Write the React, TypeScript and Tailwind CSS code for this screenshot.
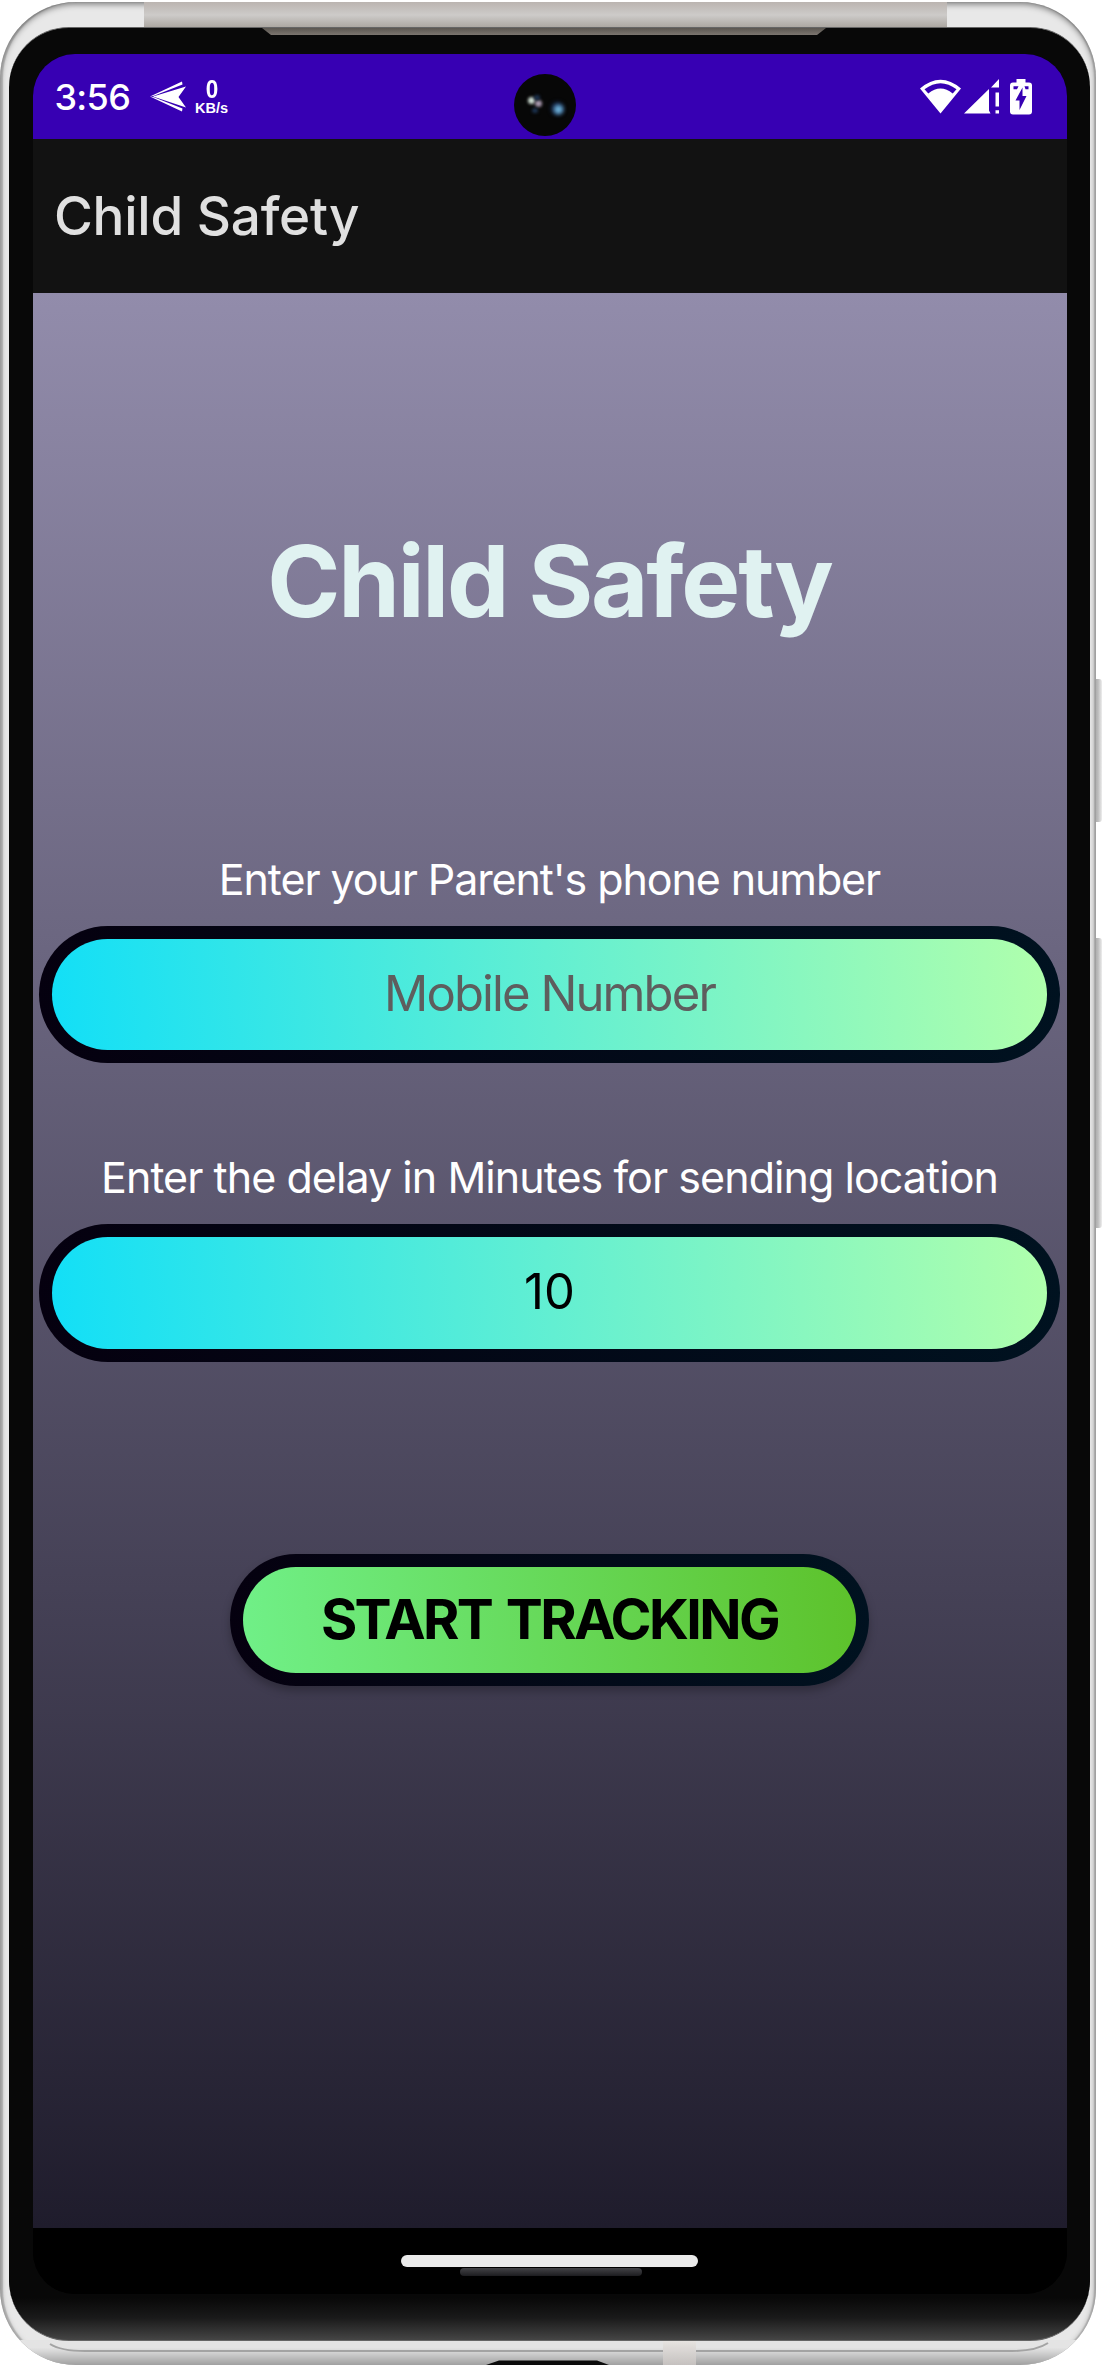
import React from "react";

function StatusBar() {
  return (
    <div className="relative flex h-[85px] shrink-0 items-center bg-[#3700b3] pl-[22px] pr-[35px] text-white">
      <span className="w-[78px] whitespace-nowrap text-[36px] font-medium leading-none tracking-[-0.7px]">3:56</span>
      <svg className="ml-[17px] h-[32px] w-[36px]" viewBox="0 0 36 32" fill="#fff">
        <path d="M3 15.5 36 5.5 28.5 16 36 26.500Z" />
        <path d="M0 15.500 32 0.500 32.500 3.500 4 14.700ZM0 15.500 32 30.500 32.500 27.500 4 16.300Z" />
      </svg>
      <div className="ml-[7px] flex w-[38px] flex-col items-center">
        <span className="scale-x-90 font-['Liberation_Sans'] text-[25px] font-bold leading-[24px]">0</span>
        <span className="font-['Liberation_Sans'] text-[14.500px] font-bold leading-[15px]">KB/s</span>
      </div>
      <div className="ml-auto flex items-center">
        <svg className="h-[36px] w-[41px]" viewBox="0 0 41 36" fill="#fff">
          <path fillRule="evenodd" d="M0 9.500Q20.500-8 41 9.500L20.500 34.500ZM4.500 10.300 8.300 14.500Q20.500 4.500 32.700 14.500L36.500 10.300Q20.500-2 4.500 10.300Z" />
        </svg>
        <svg className="ml-[3px] h-[36px] w-[36px]" viewBox="0 0 36 36" fill="#fff">
          <path d="M0 34.500 25 10V31.500L26.500 34.500ZM27 8.500 35 0V8.500ZM31.500 13.500H35V27.500H31.500ZM31.500 31.200H35V34.500H31.500Z" />
        </svg>
        <svg className="ml-[10px] h-[36px] w-[22px]" viewBox="0 0 22 36">
          <path fill="#fff" d="M6.500 0H15.500V3.500H19Q22 3.500 22 6.500V32.500Q22 35.500 19 35.500H3Q0 35.500 0 32.500V6.500Q0 3.500 3 3.500H6.500Z" />
          <path fill="#3700b3" d="M3.500 7.300H8.500L7 10.300H3.500ZM14.500 7.300H18.500V10.300H15.500ZM12.500 8.500V17H16.500L9.500 31V21.500H5.500Z" />
        </svg>
      </div>
      <div className="absolute left-[481.5px] top-[20px] h-[62px] w-[62px] rounded-full bg-[#070707]">
        <div className="absolute left-[14px] top-[23px] h-[7px] w-[7px] rounded-full bg-[#cfded4] blur-[1.500px]" />
        <div className="absolute left-[21px] top-[26px] h-[7px] w-[7px] rounded-full bg-[#a797ad] blur-[1.500px]" />
        <div className="absolute left-[20px] top-[21px] h-[5px] w-[6px] rounded-full bg-[#1c3350] blur-[1.500px]" />
        <div className="absolute left-[18px] top-[34px] h-[5px] w-[6px] rounded-full bg-[#1c3350] blur-[1.500px]" />
        <div className="absolute left-[37px] top-[28px] h-[13px] w-[13px] rounded-full bg-[#14284c] blur-[2px]" />
        <div className="absolute left-[40px] top-[31px] h-[9px] w-[9px] rounded-full bg-[#70b4dc] blur-[2px]" />
      </div>
    </div>
  );
}

function Pill({ children }: { children: React.ReactNode }) {
  return (
    <div className="mx-auto h-[137.5px] w-[1021.500px] rounded-full bg-[linear-gradient(85deg,#05000f,#001220)] p-[13px]">
      <div className="flex h-full items-center justify-center rounded-full bg-[linear-gradient(85deg,#12dff7,#62efd2_50%,#b0ffac)] pb-[2px]">
        {children}
      </div>
    </div>
  );
}

function Screen() {
  return (
    <div className="flex h-[2240px] w-[1034px] flex-col overflow-hidden rounded-[42px] bg-black">
      <StatusBar />
      <div className="flex h-[154px] shrink-0 items-center bg-[#121212] pl-[21.500px]">
        <h1 className="whitespace-nowrap text-[53px] font-medium leading-none tracking-[-0.25px] text-[#e0e0e0]">Child Safety</h1>
      </div>
      <main className="flex h-[1935px] shrink-0 flex-col items-center bg-[linear-gradient(180deg,#928cab,#1f1c2c)] text-center">
        <h2 className="mt-[228px] h-[120px] whitespace-nowrap text-[99px] font-bold leading-[120px] tracking-[-2.200px] text-[#e0f2f1]">Child Safety</h2>
        <label className="mt-[208px] h-[60px] whitespace-nowrap text-[43px] leading-[60px] tracking-[-1.100px] text-white">Enter your Parent's phone number</label>
        <div className="mt-[16.500px]">
          <Pill>
            <span className="whitespace-nowrap text-[49px] leading-none tracking-[-1.900px] text-[#5e5e5e]">Mobile Number</span>
          </Pill>
        </div>
        <label className="mt-[84px] h-[60px] whitespace-nowrap text-[43px] leading-[60px] tracking-[-0.950px] text-white">Enter the delay in Minutes for sending location</label>
        <div className="mt-[17px]">
          <Pill>
            <span className="text-[49px] leading-none text-black">10</span>
          </Pill>
        </div>
        <button className="mt-[192.500px] h-[132px] w-[639px] rounded-full bg-[linear-gradient(85deg,#05000f,#001220)] p-[13px] shadow-[0_5px_8px_rgba(0,0,0,0.25)]">
          <span className="flex h-full items-center justify-center whitespace-nowrap rounded-full bg-[linear-gradient(85deg,#70f088,#5dc22b)] pb-[3px] text-[55.500px] font-bold leading-none tracking-[-2.600px] [word-spacing:4px] text-black">
            START TRACKING
          </span>
        </button>
      </main>
      <div className="flex flex-1 flex-col items-center bg-black pt-[27px]">
        <div className="h-[12px] w-[297px] rounded-full bg-[#ebebeb]" />
        <div className="ml-[2px] mt-[1px] h-[8px] w-[182px] rounded-full bg-[linear-gradient(180deg,#424246,#1d1d20)]" />
      </div>
    </div>
  );
}

export default function App() {
  return (
    <div className="relative h-[2365px] w-[1103px] overflow-hidden bg-white font-[Inter,'Liberation_Sans',sans-serif]">
      <div className="absolute left-[1095px] top-[679px] h-[143px] w-[7px] rounded-r-[3px] bg-[linear-gradient(90deg,#a9a9a9,#bdbdbd_45%,#eeeeee)]" />
      <div className="absolute left-[1095px] top-[938px] h-[290px] w-[7px] rounded-r-[3px] bg-[linear-gradient(90deg,#a9a9a9,#bdbdbd_45%,#eeeeee)]" />
      <div className="relative mt-[2px] h-[2363px] w-[1096px] overflow-hidden rounded-[76px] bg-[#e8e8e8] shadow-[inset_0_2px_6px_rgba(0,0,0,0.5),inset_3px_0_1px_#c6c6c6,inset_-2px_0_1px_#cccccc]">
        <div className="absolute inset-x-0 bottom-0 h-[25px] bg-[linear-gradient(180deg,#e4e4e4_0_30%,#d4d4d4_48%,#a0a0a0)]" />
        <svg className="absolute bottom-0 left-0 h-[30px] w-[1096px]" viewBox="0 0 1096 30" fill="none">
          <path d="M50 9Q61 16 85 16H1012Q1036 16 1048 8" stroke="#a3a3a3" strokeWidth="2" />
          <path d="M486 30 499 25.500H597L609 30Z" fill="#0b0b0b" />
        </svg>
        <div className="absolute bottom-0 left-[663px] h-[25px] w-[33px] bg-[linear-gradient(180deg,#e8e5e2,#c5c1bf)]" />
        <div className="absolute left-[144px] top-0 h-[26px] w-[803px] bg-[linear-gradient(180deg,#bbb4b0,#cdcbc9_50%,#aaa59f)]" />
        <div className="relative ml-[9px] mt-[25px] flex h-[2314px] w-[1081px] rounded-[60px] border-t border-b border-[#666666] bg-[linear-gradient(180deg,#080808_0,#080808_2270px,#1a1a1a_2290px,#454545_2312px)] pl-[23.500px] pt-[26px]">
          <div className="absolute left-[253px] top-0 h-[7px] w-[564px] bg-[linear-gradient(180deg,#5b5650,#7c7670)] [clip-path:polygon(0_0,100%_0,calc(100%-9px)_100%,9px_100%)]" />
          <Screen />
        </div>
      </div>
    </div>
  );
}
